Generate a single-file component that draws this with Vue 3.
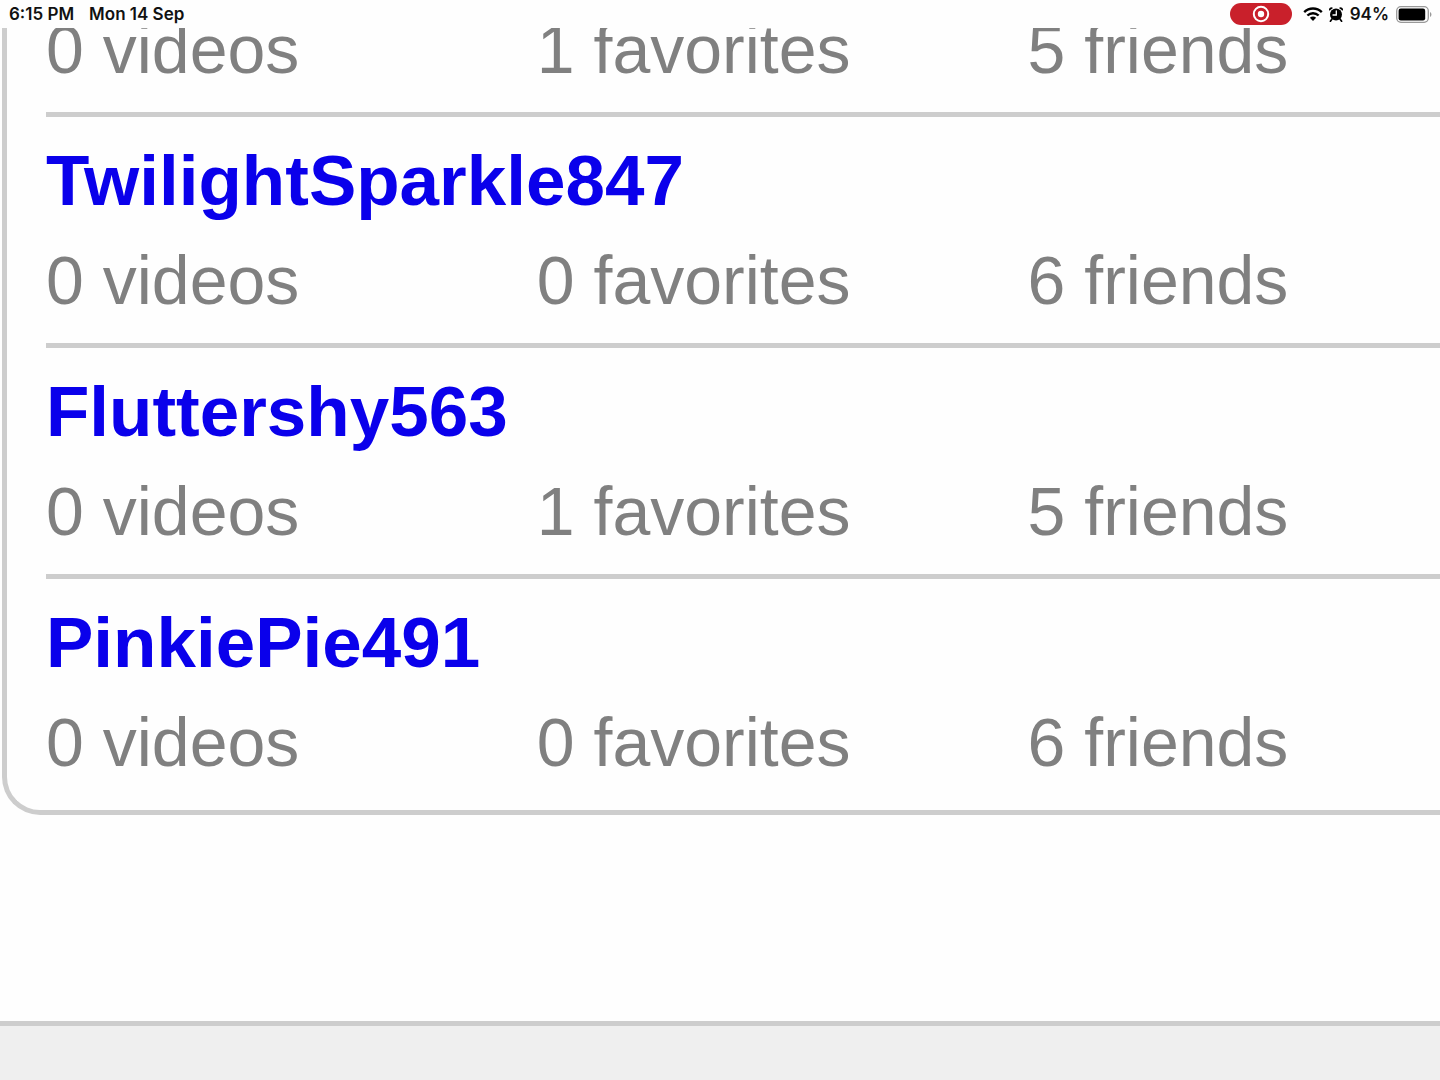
<template>
  <div class="screen">
    <header class="status-bar">
      <div class="status-group left">
        <span>6:15 PM</span>
        <span>Mon 14 Sep</span>
      </div>
      <div class="status-group right">
        <button class="record-pill" type="button" aria-label="Stop recording">
          <svg width="18" height="18" viewBox="0 0 18 18">
            <circle cx="9" cy="9" r="7.2" fill="none" stroke="#fff" stroke-width="2" />
            <circle cx="9" cy="9" r="3.2" fill="#fff" />
          </svg>
        </button>
        <svg class="wifi" width="20" height="14" viewBox="0 0 20 14">
          <g fill="none" stroke="#000" stroke-width="2.4">
            <path d="M1.2 5.2C6.2 0.3 13.8 0.3 18.8 5.2" />
            <path d="M4.4 8.5C7.6 5.4 12.4 5.4 15.6 8.5" />
          </g>
          <path d="M6.9 10.8C8.7 9.2 11.3 9.2 13.1 10.8L10 13.9Z" fill="#000" />
        </svg>
        <svg class="alarm" width="14" height="15" viewBox="0 0 14 15">
          <circle cx="7" cy="7.6" r="6" fill="#000" />
          <path d="M0.3 3.8A2.4 2.4 0 0 1 4 0.9ZM13.7 3.8A2.4 2.4 0 0 0 10 0.9Z" fill="#000" />
          <path d="M3 12L1.4 14.2M11 12L12.6 14.2" stroke="#000" stroke-width="1.7" stroke-linecap="round" />
          <path d="M7.3 3.8V8H4" fill="none" stroke="#fff" stroke-width="1.3" stroke-linecap="round" />
        </svg>
        <span class="percent">94%</span>
        <svg class="battery" width="36" height="17" viewBox="0 0 36 17">
          <rect x="0.7" y="0.7" width="31.6" height="15.6" rx="4.2" fill="none" stroke="#999" stroke-width="1.3" />
          <rect x="2.6" y="2.6" width="26.6" height="11.8" rx="2.2" fill="#000" />
          <path d="M34 6V11C35.9 10.2 35.9 6.8 34 6Z" fill="#999" />
        </svg>
      </div>
    </header>

    <main class="content">
      <ul class="panel">
        <li v-for="(user, index) in users" :key="index" class="user">
          <a v-if="user.name" class="name" href="#">{{ user.name }}</a>
          <div class="stats">
            <span>{{ user.videos }} videos</span>
            <span>{{ user.favorites }} favorites</span>
            <span>{{ user.friends }} friends</span>
          </div>
        </li>
      </ul>
    </main>

    <footer class="footer"></footer>
  </div>
</template>

<script setup>
// the first entry is scrolled half way under the status bar
const users = [
  { name: '', videos: 0, favorites: 1, friends: 5 },
  { name: 'TwilightSparkle847', videos: 0, favorites: 0, friends: 6 },
  { name: 'Fluttershy563', videos: 0, favorites: 1, friends: 5 },
  { name: 'PinkiePie491', videos: 0, favorites: 0, friends: 6 }
]
</script>

<style>
body {
  margin: 0;
  background: #fff;
}
</style>

<style scoped>
.screen {
  display: flex;
  flex-direction: column;
  min-height: 100vh;
  background: #fefefe;
  font-family: "Liberation Sans", Arial, sans-serif;
}
.status-bar {
  display: flex;
  justify-content: space-between;
  height: 28px;
  padding: 0 8px 0 9px;
  font-family: Inter, "Liberation Sans", sans-serif;
  font-size: 17px;
  font-weight: 600;
  line-height: 28px;
  color: #111;
  white-space: nowrap;
}
.status-group {
  display: flex;
  align-items: center;
}
.left {
  gap: 15px;
}
.record-pill {
  display: flex;
  align-items: center;
  justify-content: center;
  width: 62px;
  height: 22px;
  margin-right: 11px;
  padding: 0;
  border: 0;
  border-radius: 11px;
  background: #c9202b;
}
.wifi {
  margin-right: 6px;
}
.alarm {
  margin-right: 7px;
}
.percent {
  margin-right: 7px;
}
.content {
  overflow: hidden;
}
.panel {
  margin: -19px 0 206px 2px;
  padding: 0 0 5px 39px;
  border: solid #cdcdcd;
  border-width: 0 0 5px 5px;
  border-bottom-left-radius: 38px;
  list-style: none;
}
.user {
  padding: 24px 0 23px;
}
.user:first-child {
  padding-top: 0;
}
.user + .user {
  border-top: 5px solid #cdcdcd;
}
.name {
  display: block;
  width: fit-content;
  margin-bottom: 19px;
  font-size: 71px;
  font-weight: 700;
  line-height: 80px;
  color: #0a00eb;
  text-decoration: none;
}
.stats {
  display: grid;
  grid-template-columns: 1.19fr 1.19fr 1fr;
  font-size: 68px;
  line-height: 80px;
  color: #808080;
  white-space: nowrap;
}
.footer {
  flex: 1;
  border-top: 5px solid #cdcdcd;
  background: #efefef;
}
</style>
